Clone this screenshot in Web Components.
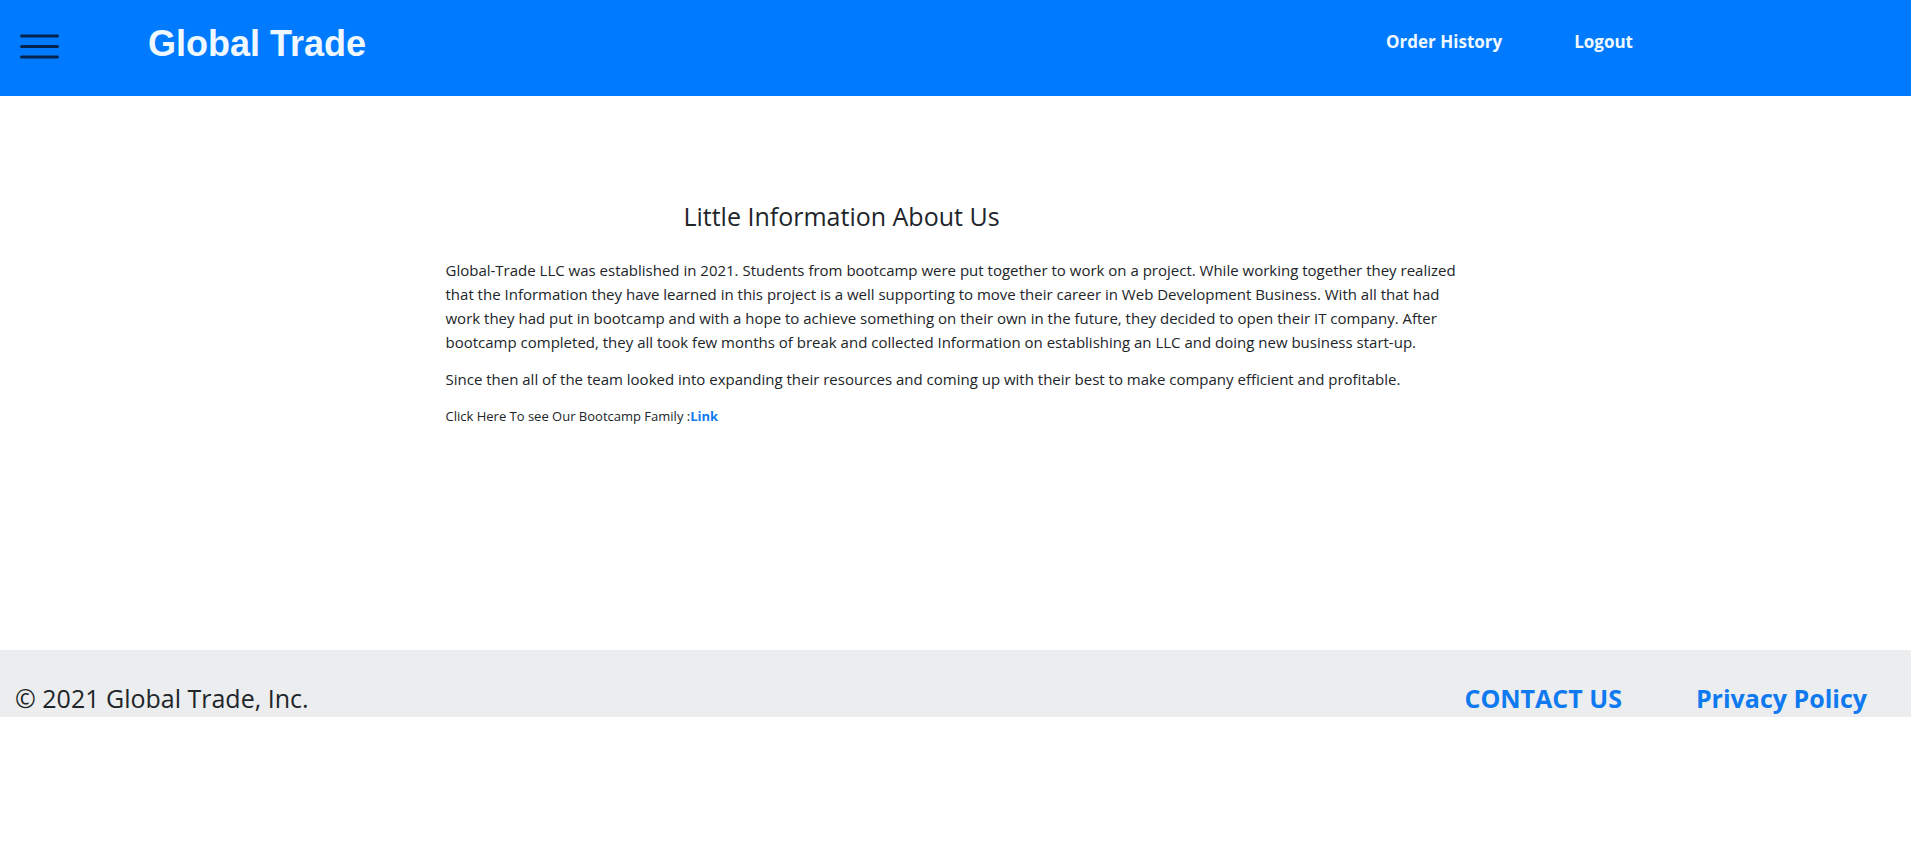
<!DOCTYPE html>
<html lang="en">
<head>
<meta charset="utf-8">
<meta name="viewport" content="width=device-width, initial-scale=1">
<title>Global Trade</title>
<style>
body { margin: 0; background: #fff; color: #212529; font: 15px/24px "Open Sans", "Noto Sans", sans-serif; }
</style>
</head>
<body>
<trade-page></trade-page>
<script>
const define = (name, html) => customElements.define(name, class extends HTMLElement {
  constructor() {
    super();
    const template = document.createElement('template');
    // Whitespace between tags would show as a gap in inline elements.
    template.innerHTML = html.replace(/>\s+</g, '><').trim();
    this.attachShadow({ mode: 'open' }).append(template.content.cloneNode(true));
  }
});

define('menu-button', `
  <style>
    :host { display: block; }
    button { display: block; padding: 0; border: 0; background: none; cursor: pointer; }
    svg { display: block; }
  </style>
  <button type="button" aria-label="Open menu">
    <svg width="40" height="28" viewBox="0 0 40 28" fill="none" stroke="#02234d" stroke-width="3" stroke-linecap="round" aria-hidden="true">
      <path d="M1.5 4H37.5M1.5 14.5H37.5M1.5 25H37.5"/>
    </svg>
  </button>`);

define('site-header', `
  <style>
    :host { display: block; background: #007bff; }
    header { display: flex; align-items: flex-start; height: 96px; padding: 0 278px 0 20px; box-sizing: border-box; }
    menu-button { margin-top: 32px; }
    h1 { margin: 20px auto 0 88px; color: #f0f8ff; font: bold 36px/48px "Liberation Sans", Arial, sans-serif; }
    nav { display: flex; gap: 72px; margin-top: 30px; }
  </style>
  <header>
    <menu-button></menu-button>
    <h1>Global Trade</h1>
    <nav aria-label="Account"><slot></slot></nav>
  </header>`);

define('nav-link', `
  <style>
    :host { display: block; color: #f0f8ff; font-size: 17px; font-weight: 700; }
    :host([kind="footer"]) { color: #0f7af0; font-size: 25px; line-height: 38px; }
    :host([kind="inline"]) { display: inline; color: #0f7af0; font-size: inherit; }
    a { color: inherit; text-decoration: none; }
  </style>
  <a href="#"><slot></slot></a>`);

define('about-section', `
  <style>
    :host { display: block; }
    main { max-width: 1020px; min-height: 554px; margin: 0 auto; padding-top: 101px; box-sizing: border-box; }
    h2 { margin: 0 228px 23px 0; text-align: center; font-size: 25px; line-height: 38px; font-weight: 400; }
    p { margin: 0 0 13px; }
    .small { font-size: 13px; }
  </style>
  <main>
    <h2>Little Information About Us</h2>
    <p>Global-Trade LLC was established in 2021. Students from bootcamp were put together to work on a project. While working together they realized that the Information they have learned in this project is a well supporting to move their career in Web Development Business. With all that had work they had put in bootcamp and with a hope to achieve something on their own in the future, they decided to open their IT company. After bootcamp completed, they all took few months of break and collected Information on establishing an LLC and doing new business start-up.</p>
    <p>Since then all of the team looked into expanding their resources and coming up with their best to make company efficient and profitable.</p>
    <p class="small">Click Here To see Our Bootcamp Family :<nav-link kind="inline">Link</nav-link></p>
  </main>`);

define('site-footer', `
  <style>
    :host { display: block; background: #ebedee; }
    footer { display: flex; justify-content: space-between; padding: 29px 44px 0 15px; font-size: 25px; line-height: 38px; }
    nav { display: flex; gap: 74px; }
  </style>
  <footer>
    <span>© 2021 Global Trade, Inc.</span>
    <nav aria-label="Footer"><slot></slot></nav>
  </footer>`);

define('trade-page', `
  <style>:host { display: block; }</style>
  <site-header>
    <nav-link>Order History</nav-link>
    <nav-link>Logout</nav-link>
  </site-header>
  <about-section></about-section>
  <site-footer>
    <nav-link kind="footer">CONTACT US</nav-link>
    <nav-link kind="footer">Privacy Policy</nav-link>
  </site-footer>`);
</script>
</body>
</html>
